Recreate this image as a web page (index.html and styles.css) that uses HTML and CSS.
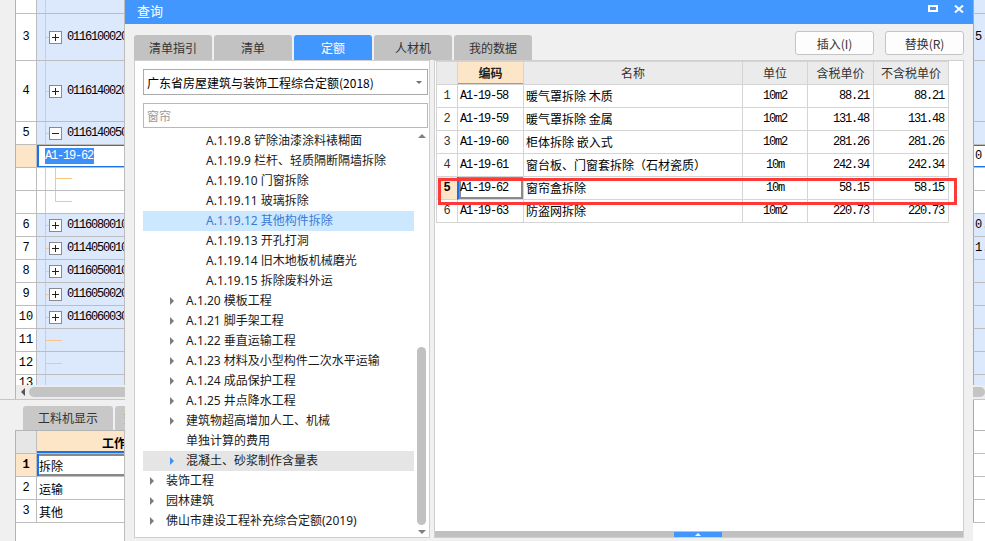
FILE: index.html
```html
<!DOCTYPE html>
<html lang="zh-CN">
<head>
<meta charset="utf-8">
<title>查询</title>
<link rel="stylesheet" href="styles.css">
</head>
<body>
<div class="app">
  <div class="grid">
    <div class="row h14"><div class="num"></div><div class="code blue t-vl"></div><div class="mid"></div><div class="right blue"></div></div>
    <div class="row h47"><div class="num">3</div><div class="code blue t-plus"><span class="box plus"></span><span class="ctext">011610002001</span></div><div class="mid"></div><div class="right blue">5.</div></div>
    <div class="row h61"><div class="num">4</div><div class="code blue t-plus"><span class="box plus"></span><span class="ctext">011614002001</span></div><div class="mid"></div><div class="right blue"></div></div>
    <div class="row"><div class="num">5</div><div class="code blue t-plus"><span class="box minus"></span><span class="ctext">011614005001</span></div><div class="mid"></div><div class="right blue"></div></div>
    <div class="row edit"><div class="num"></div><div class="code"><span class="sel">A1-19-62</span></div><div class="mid"></div><div class="right">0</div></div>
    <div class="row"><div class="num"></div><div class="code t-sub1"></div><div class="mid"></div><div class="right"></div></div>
    <div class="row"><div class="num"></div><div class="code t-sub2"></div><div class="mid"></div><div class="right"></div></div>
    <div class="row"><div class="num">6</div><div class="code blue t-plus"><span class="box plus"></span><span class="ctext">011608001001</span></div><div class="mid"></div><div class="right blue">0.</div></div>
    <div class="row"><div class="num">7</div><div class="code blue t-plus"><span class="box plus"></span><span class="ctext">011405001001</span></div><div class="mid"></div><div class="right blue">1.</div></div>
    <div class="row"><div class="num">8</div><div class="code blue t-plus"><span class="box plus"></span><span class="ctext">011605001001</span></div><div class="mid"></div><div class="right blue"></div></div>
    <div class="row"><div class="num">9</div><div class="code blue t-plus"><span class="box plus"></span><span class="ctext">011605002001</span></div><div class="mid"></div><div class="right blue"></div></div>
    <div class="row"><div class="num">10</div><div class="code blue t-plus"><span class="box plus"></span><span class="ctext">011606003001</span></div><div class="mid"></div><div class="right blue"></div></div>
    <div class="row"><div class="num">11</div><div class="code blue t-leaf"></div><div class="mid"></div><div class="right blue"></div></div>
    <div class="row"><div class="num">12</div><div class="code blue t-leaf"></div><div class="mid"></div><div class="right blue"></div></div>
    <div class="row h10"><div class="num cut">13</div><div class="code blue t-vl"></div><div class="mid"></div><div class="right blue"></div></div>
  </div>
  <div class="hscroll"><span class="harrow"></span><span class="hthumb"></span></div>
  <div class="tabstrip"><div class="btab">工料机显示</div><div class="btab">查看单价构成</div><div class="tabfill"></div></div>
  <div class="grid bgrid">
    <div class="row bhead"><div class="num"></div><div class="code"><span class="htext">工作内容</span></div><div class="mid"></div><div class="right"></div></div>
    <div class="row bsel"><div class="num">1</div><div class="code">拆除</div><div class="mid"></div><div class="right"></div></div>
    <div class="row"><div class="num">2</div><div class="code">运输</div><div class="mid"></div><div class="right"></div></div>
    <div class="row"><div class="num">3</div><div class="code">其他</div><div class="mid"></div><div class="right"></div></div>
    <div class="bfill"><div class="code"></div></div>
  </div>
</div>

<div class="dialog">
  <div class="titlebar">
    <span class="title">查询</span>
    <span class="tb-icons">
      <span class="ico-max"></span>
      <svg class="ico-close" width="10" height="8" viewBox="0 0 10 8"><path d="M1 0.5 L9 7.5 M9 0.5 L1 7.5" stroke="#fff" stroke-width="2" fill="none"/></svg>
    </span>
  </div>
  <div class="toolbar">
    <div class="tabs">
      <div class="tab">清单指引</div>
      <div class="tab">清单</div>
      <div class="tab active">定额</div>
      <div class="tab">人材机</div>
      <div class="tab">我的数据</div>
    </div>
    <div class="actions">
      <button class="btn">插入(I)</button>
      <button class="btn">替换(R)</button>
    </div>
  </div>
  <div class="panels">
    <div class="lpanel">
      <div class="select"><span>广东省房屋建筑与装饰工程综合定额(2018)</span><i class="caret"></i></div>
      <div class="search">窗帘</div>
      <div class="treewrap">
        <ul class="tree">
          <li class="l3"><i class="slot"></i>A.1.19.8 铲除油漆涂料裱糊面</li>
          <li class="l3"><i class="slot"></i>A.1.19.9 栏杆、轻质隔断隔墙拆除</li>
          <li class="l3"><i class="slot"></i>A.1.19.10 门窗拆除</li>
          <li class="l3"><i class="slot"></i>A.1.19.11 玻璃拆除</li>
          <li class="l3 selected"><i class="slot"></i>A.1.19.12 其他构件拆除</li>
          <li class="l3"><i class="slot"></i>A.1.19.13 开孔打洞</li>
          <li class="l3"><i class="slot"></i>A.1.19.14 旧木地板机械磨光</li>
          <li class="l3"><i class="slot"></i>A.1.19.15 拆除废料外运</li>
          <li class="l2"><i class="slot arr"></i>A.1.20 模板工程</li>
          <li class="l2"><i class="slot arr"></i>A.1.21 脚手架工程</li>
          <li class="l2"><i class="slot arr"></i>A.1.22 垂直运输工程</li>
          <li class="l2"><i class="slot arr"></i>A.1.23 材料及小型构件二次水平运输</li>
          <li class="l2"><i class="slot arr"></i>A.1.24 成品保护工程</li>
          <li class="l2"><i class="slot arr"></i>A.1.25 井点降水工程</li>
          <li class="l2"><i class="slot arr"></i>建筑物超高增加人工、机械</li>
          <li class="l2"><i class="slot"></i>单独计算的费用</li>
          <li class="l2 hover"><i class="slot arr"></i>混凝土、砂浆制作含量表</li>
          <li class="l1"><i class="slot arr"></i>装饰工程</li>
          <li class="l1"><i class="slot arr"></i>园林建筑</li>
          <li class="l1"><i class="slot arr"></i>佛山市建设工程补充综合定额(2019)</li>
        </ul>
        <div class="vscroll"><i class="up"></i><div class="vthumb"></div><i class="down"></i></div>
      </div>
    </div>
    <div class="rpanel">
      <div class="qtable">
        <div class="qrow qhead"><div></div><div class="hcur">编码</div><div>名称</div><div>单位</div><div>含税单价</div><div>不含税单价</div></div>
        <div class="qrow"><div class="qn">1</div><div class="qc">A1-19-58</div><div class="qname">暖气罩拆除 木质</div><div class="qu">10m2</div><div class="qp">88.21</div><div class="qp">88.21</div></div>
        <div class="qrow"><div class="qn">2</div><div class="qc">A1-19-59</div><div class="qname">暖气罩拆除 金属</div><div class="qu">10m2</div><div class="qp">131.48</div><div class="qp">131.48</div></div>
        <div class="qrow"><div class="qn">3</div><div class="qc">A1-19-60</div><div class="qname">柜体拆除 嵌入式</div><div class="qu">10m2</div><div class="qp">281.26</div><div class="qp">281.26</div></div>
        <div class="qrow"><div class="qn">4</div><div class="qc">A1-19-61</div><div class="qname">窗台板、门窗套拆除（石材瓷质）</div><div class="qu">10m</div><div class="qp">242.34</div><div class="qp">242.34</div></div>
        <div class="qrow qsel"><div class="qn">5</div><div class="qc">A1-19-62</div><div class="qname">窗帘盒拆除</div><div class="qu">10m</div><div class="qp">58.15</div><div class="qp">58.15</div></div>
        <div class="qrow"><div class="qn">6</div><div class="qc">A1-19-63</div><div class="qname">防盗网拆除</div><div class="qu">10m2</div><div class="qp">220.73</div><div class="qp">220.73</div></div>
      </div>
      <div class="rbar"><span class="rtab"><i></i></span></div>
    </div>
  </div>
</div>

<div class="redbox"></div>
</body>
</html>
```

FILE: styles.css
```css
* { box-sizing: border-box; margin: 0; padding: 0; }

body {
  width: 985px;
  height: 541px;
  overflow: hidden;
  position: relative;
  background: #f0f0f0;
  font-family: "Noto Sans", "Noto Sans CJK SC", sans-serif;
  font-size: 12px;
  color: #000;
}

/* ---------- background application ---------- */
.app { display: flex; flex-direction: column; height: 541px; }

.grid {
  margin-left: 15px;
  border-left: 1px solid #b4b4b4;
  display: flex;
  flex-direction: column;
  background: #fff;
}

.row { display: flex; height: 23px; border-bottom: 1px solid #bdbdbd; }
.row.h14 { height: 14px; }
.row.h47 { height: 47px; }
.row.h61 { height: 61px; }
.row.h10 { height: 10px; border-bottom: none; overflow: hidden; }

.row > div { border-right: 1px solid #bdbdbd; }

.num {
  width: 21px;
  display: flex;
  align-items: center;
  justify-content: center;
  font-family: "Liberation Mono", monospace;
  font-size: 12px;
  background: #fff;
  overflow: hidden;
}
.num.cut { align-items: flex-start; padding-top: 1px; }

.code {
  width: 88px;
  display: flex;
  align-items: center;
  padding-left: 12px;
  overflow: hidden;
  white-space: nowrap;
  background-color: #fff;
  background-repeat: no-repeat;
}
.mid { width: 849px; }
.right {
  flex: 1;
  display: flex;
  align-items: center;
  padding-left: 1px;
  overflow: hidden;
  font-family: "Liberation Mono", monospace;
  font-size: 12px;
  background: #fff;
}
.row > .right { border-right: none; border-left: 1px solid #a9a9a9; margin-left: -1px; }

.blue { background-color: #dce8fb; }
.right.blue { background: #dce8fb; }

.t-vl { background-image: linear-gradient(#fbc483, #fbc483); background-size: 1px 100%; background-position: 8px 0; }
.t-plus {
  background-image: linear-gradient(#fbc483, #fbc483), linear-gradient(#fbc483, #fbc483);
  background-size: 1px 100%, 4px 1px;
  background-position: 8px 0, 8px 50%;
}
.t-leaf {
  background-image: linear-gradient(#fbc483, #fbc483), linear-gradient(#fbc483, #fbc483);
  background-size: 1px 100%, 17px 1px;
  background-position: 8px 0, 8px 50%;
}
.t-sub1 {
  background-image: linear-gradient(#fbc483, #fbc483), linear-gradient(#fbc483, #fbc483), linear-gradient(#fbc483, #fbc483);
  background-size: 1px 100%, 1px 100%, 17px 1px;
  background-position: 8px 0, 18px 0, 18px 10px;
}
.t-sub2 {
  background-image: linear-gradient(#fbc483, #fbc483), linear-gradient(#fbc483, #fbc483), linear-gradient(#fbc483, #fbc483);
  background-size: 1px 100%, 1px 11px, 17px 1px;
  background-position: 8px 0, 18px 0, 18px 10px;
}

.box {
  flex: none;
  width: 13px;
  height: 13px;
  border: 1px solid #8a8a8a;
  background-color: #fff;
  background-repeat: no-repeat;
  background-image: linear-gradient(#222, #222), linear-gradient(#222, #222);
  background-size: 7px 1px, 1px 7px;
  background-position: 2px 5px, 5px 2px;
  margin-right: 5px;
}
.box.minus { background-image: linear-gradient(#222, #222); background-size: 7px 1px; background-position: 2px 5px; }

.ctext {
  font-family: "Liberation Mono", monospace;
  font-size: 12px;
  letter-spacing: -1.2px;
}

.edit .num { background: #fde6c8; }
.edit .code {
  padding-left: 8px;
  box-shadow: inset 2px 0 0 #1a73e8, inset 0 1px 0 #1a73e8, inset 0 -1px 0 #1a73e8;
}
.edit .right { box-shadow: inset 0 1px 0 #1a73e8, inset 0 -1px 0 #1a73e8; }
.sel {
  background: #3d8ef7;
  color: #fff;
  font-family: "Liberation Mono", monospace;
  font-size: 12px;
  letter-spacing: -1.2px;
  line-height: 16px;
  padding-right: 1px;
}

.hscroll {
  height: 14px;
  margin-left: 15px;
  border-left: 1px solid #b4b4b4;
  background: #ececec;
  display: flex;
  align-items: center;
}
.harrow {
  width: 0; height: 0;
  border-right: 4px solid #555;
  border-top: 4px solid transparent;
  border-bottom: 4px solid transparent;
  margin-left: 5px;
}
.hthumb { flex: 1; height: 10px; background: #c4c4c4; border-radius: 5px; margin-left: 4px; }

.tabstrip {
  height: 31px;
  border-top: 1px solid #c6c6c6;
  background: #f0f0f0;
  display: flex;
  align-items: flex-end;
  gap: 2px;
  padding-left: 23px;
}
.btab {
  width: 90px;
  height: 24px;
  background: #c8c8c8;
  border-radius: 3px 3px 0 0;
  color: #333;
  text-align: center;
  line-height: 24px;
  font-family: "Noto Sans CJK SC", sans-serif;
  white-space: nowrap;
  overflow: hidden;
}
.tabfill { margin-left: auto; width: 12px; height: 30px; background: #fff; border-left: 1px solid #a9a9a9; }

.bgrid { flex: 1; border-top: 1px solid #b4b4b4; }
.bgrid .code { padding-left: 2px; font-family: "Noto Sans CJK SC", sans-serif; }
.bhead .num { background: #e6e6e6; }
.bhead .code { background: #fde6c8; padding-left: 65px; font-weight: bold; box-shadow: inset 0 -2px 0 #1a73e8; }
.bsel .num { background: #fde6c8; font-weight: bold; }
.bsel .code { box-shadow: inset 2px 0 0 #1a73e8, inset 0 2px 0 #888, inset 0 -2px 0 #888; }
.bfill { flex: 1; display: flex; padding-left: 21px; }
.bfill .code { border-right: 1px solid #bdbdbd; }

/* ---------- dialog ---------- */
.dialog {
  position: absolute;
  left: 125px;
  top: 0;
  width: 848px;
  height: 541px;
  background: #f0f0f0;
  display: flex;
  flex-direction: column;
}
.titlebar {
  height: 24px;
  flex: none;
  background: #4297fe;
  display: flex;
  align-items: center;
  padding: 0 9px 0 12px;
}
.title { color: #fff; font-family: "Noto Sans CJK SC", sans-serif; font-size: 13px; line-height: 20px; margin-top: -2px; }
.tb-icons { margin-left: auto; display: flex; align-items: flex-start; gap: 16px; align-self: flex-start; margin-top: 5px; }
.ico-max { width: 10px; height: 7px; border: 2px solid #fff; border-top-width: 2px; }
.ico-close { display: block; }

.toolbar {
  height: 36px;
  flex: none;
  display: flex;
  padding: 0 9px;
}
.tabs { display: flex; gap: 2px; align-self: flex-end; }
.tab {
  width: 78px;
  height: 25px;
  background: #c2c2c2;
  border-radius: 3px 3px 0 0;
  color: #333;
  text-align: center;
  line-height: 25px;
  font-family: "Noto Sans CJK SC", sans-serif;
  font-size: 12px;
}
.tab.active { background: #4297fe; color: #fff; }
.actions { margin-left: auto; display: flex; gap: 11px; margin-top: 7px; align-self: flex-start; }
.btn {
  width: 79px;
  height: 24px;
  background: #fdfdfd;
  border: 1px solid #c4c4c4;
  border-radius: 3px;
  color: #333;
  font-family: "Noto Sans CJK SC", sans-serif;
  font-size: 12px;
}

.panels { flex: 1; display: flex; gap: 4px; padding: 0 9px 3px 9px; }
.lpanel {
  width: 296px;
  border: 1px solid #cfcfcf;
  background: #fff;
  display: flex;
  flex-direction: column;
  padding: 8px 1px 0 8px;
}
.select {
  height: 26px;
  border: 1px solid #ababab;
  display: flex;
  align-items: center;
  padding: 0 5px 0 3px;
  font-family: "Noto Sans CJK SC", sans-serif;
  white-space: nowrap;
}
.caret {
  margin-left: auto;
  width: 0; height: 0;
  border-top: 3px solid #707070;
  border-left: 3px solid transparent;
  border-right: 3px solid transparent;
}
.search {
  margin-top: 8px;
  height: 25px;
  border: 1px solid #b8b8b8;
  color: #9a9a9a;
  padding-left: 3px;
  line-height: 23px;
  font-family: "Noto Sans CJK SC", sans-serif;
}
.treewrap { margin-top: 3px; flex: 1; display: flex; min-height: 0; }
.tree { list-style: none; width: 271px; overflow: hidden; }
.tree li {
  height: 20px;
  line-height: 20px;
  display: flex;
  align-items: center;
  white-space: nowrap;
  color: #1a1a1a;
}
.tree .l1 { padding-left: 7px; }
.tree .l2 { padding-left: 27px; }
.tree .l3 { padding-left: 47px; }
.slot { flex: none; width: 16px; height: 20px; display: flex; align-items: center; }
.slot.arr::before {
  content: "";
  width: 0; height: 0;
  border-left: 4px solid #7c7c7c;
  border-top: 4px solid transparent;
  border-bottom: 4px solid transparent;
}
.tree li.selected { background: #cce8ff; color: #3a7ad4; }
.tree li.hover { background: #e5e5e5; }
.tree li.hover .slot.arr::before { border-left-color: #3d8ef7; }

.vscroll { width: 11px; margin-left: 2px; display: flex; flex-direction: column; align-items: center; }
.vscroll .up {
  margin-top: 3px;
  width: 0; height: 0;
  border-bottom: 4px solid #808080;
  border-left: 4px solid transparent;
  border-right: 4px solid transparent;
}
.vthumb { margin-top: 209px; width: 9px; height: 178px; background: #c1c1c1; border-radius: 5px; }
.vscroll .down {
  margin-top: auto;
  margin-bottom: 3px;
  width: 0; height: 0;
  border-top: 4px solid #808080;
  border-left: 4px solid transparent;
  border-right: 4px solid transparent;
}

.rpanel {
  width: 530px;
  border: 1px solid #cfcfcf;
  background: #fff;
  display: flex;
  flex-direction: column;
}
.qtable {
  margin-left: 1px;
  width: 513px;
  border-top: 1px solid #d4d4d4;
  border-right: 1px solid #d4d4d4;
}
.qrow {
  display: grid;
  grid-template-columns: 21px 66px 219px 65px 66px 75px;
  height: 23px;
}
.qrow > div {
  border-left: 1px solid #d4d4d4;
  border-bottom: 1px solid #d4d4d4;
  line-height: 22px;
  white-space: nowrap;
  overflow: hidden;
}
.qhead > div {
  background: #ebebeb;
  text-align: center;
  color: #333;
  font-family: "Noto Sans CJK SC", sans-serif;
}
.qhead > .hcur { background: #fde6c8; font-weight: bold; color: #222; box-shadow: inset 0 -1px 0 #6aa6ee; }
.qn { text-align: center; color: #333; font-family: "Liberation Mono", monospace; }
.qc, .qu, .qp { font-family: "Liberation Mono", monospace; font-size: 12px; letter-spacing: -1.2px; }
.qc { padding-left: 2px; }
.qu { text-align: center; }
.qp { text-align: right; padding-right: 4px; }
.qname { padding-left: 2px; font-family: "Noto Sans CJK SC", sans-serif; }
.qsel .qn { background: #fde6c8; font-weight: bold; color: #000; }
.qsel .qc { border-left: 2px solid #1a73e8; box-shadow: inset 0 0 0 2px #8a8a8a; padding-left: 1px; }

.rbar { margin-top: auto; height: 6px; background: #c0c0c0; position: relative; }
.rtab {
  position: absolute;
  left: 239px;
  top: 1px;
  width: 48px;
  height: 5px;
  background: #4297fe;
  display: flex;
  justify-content: center;
  align-items: center;
}
.rtab i {
  width: 0; height: 0;
  border-bottom: 3px solid #fff;
  border-left: 3px solid transparent;
  border-right: 3px solid transparent;
}

/* annotation overlay */
.redbox {
  position: absolute;
  left: 438px;
  top: 178px;
  width: 519px;
  height: 27px;
  border: 3px solid #ff3838;
}
```
